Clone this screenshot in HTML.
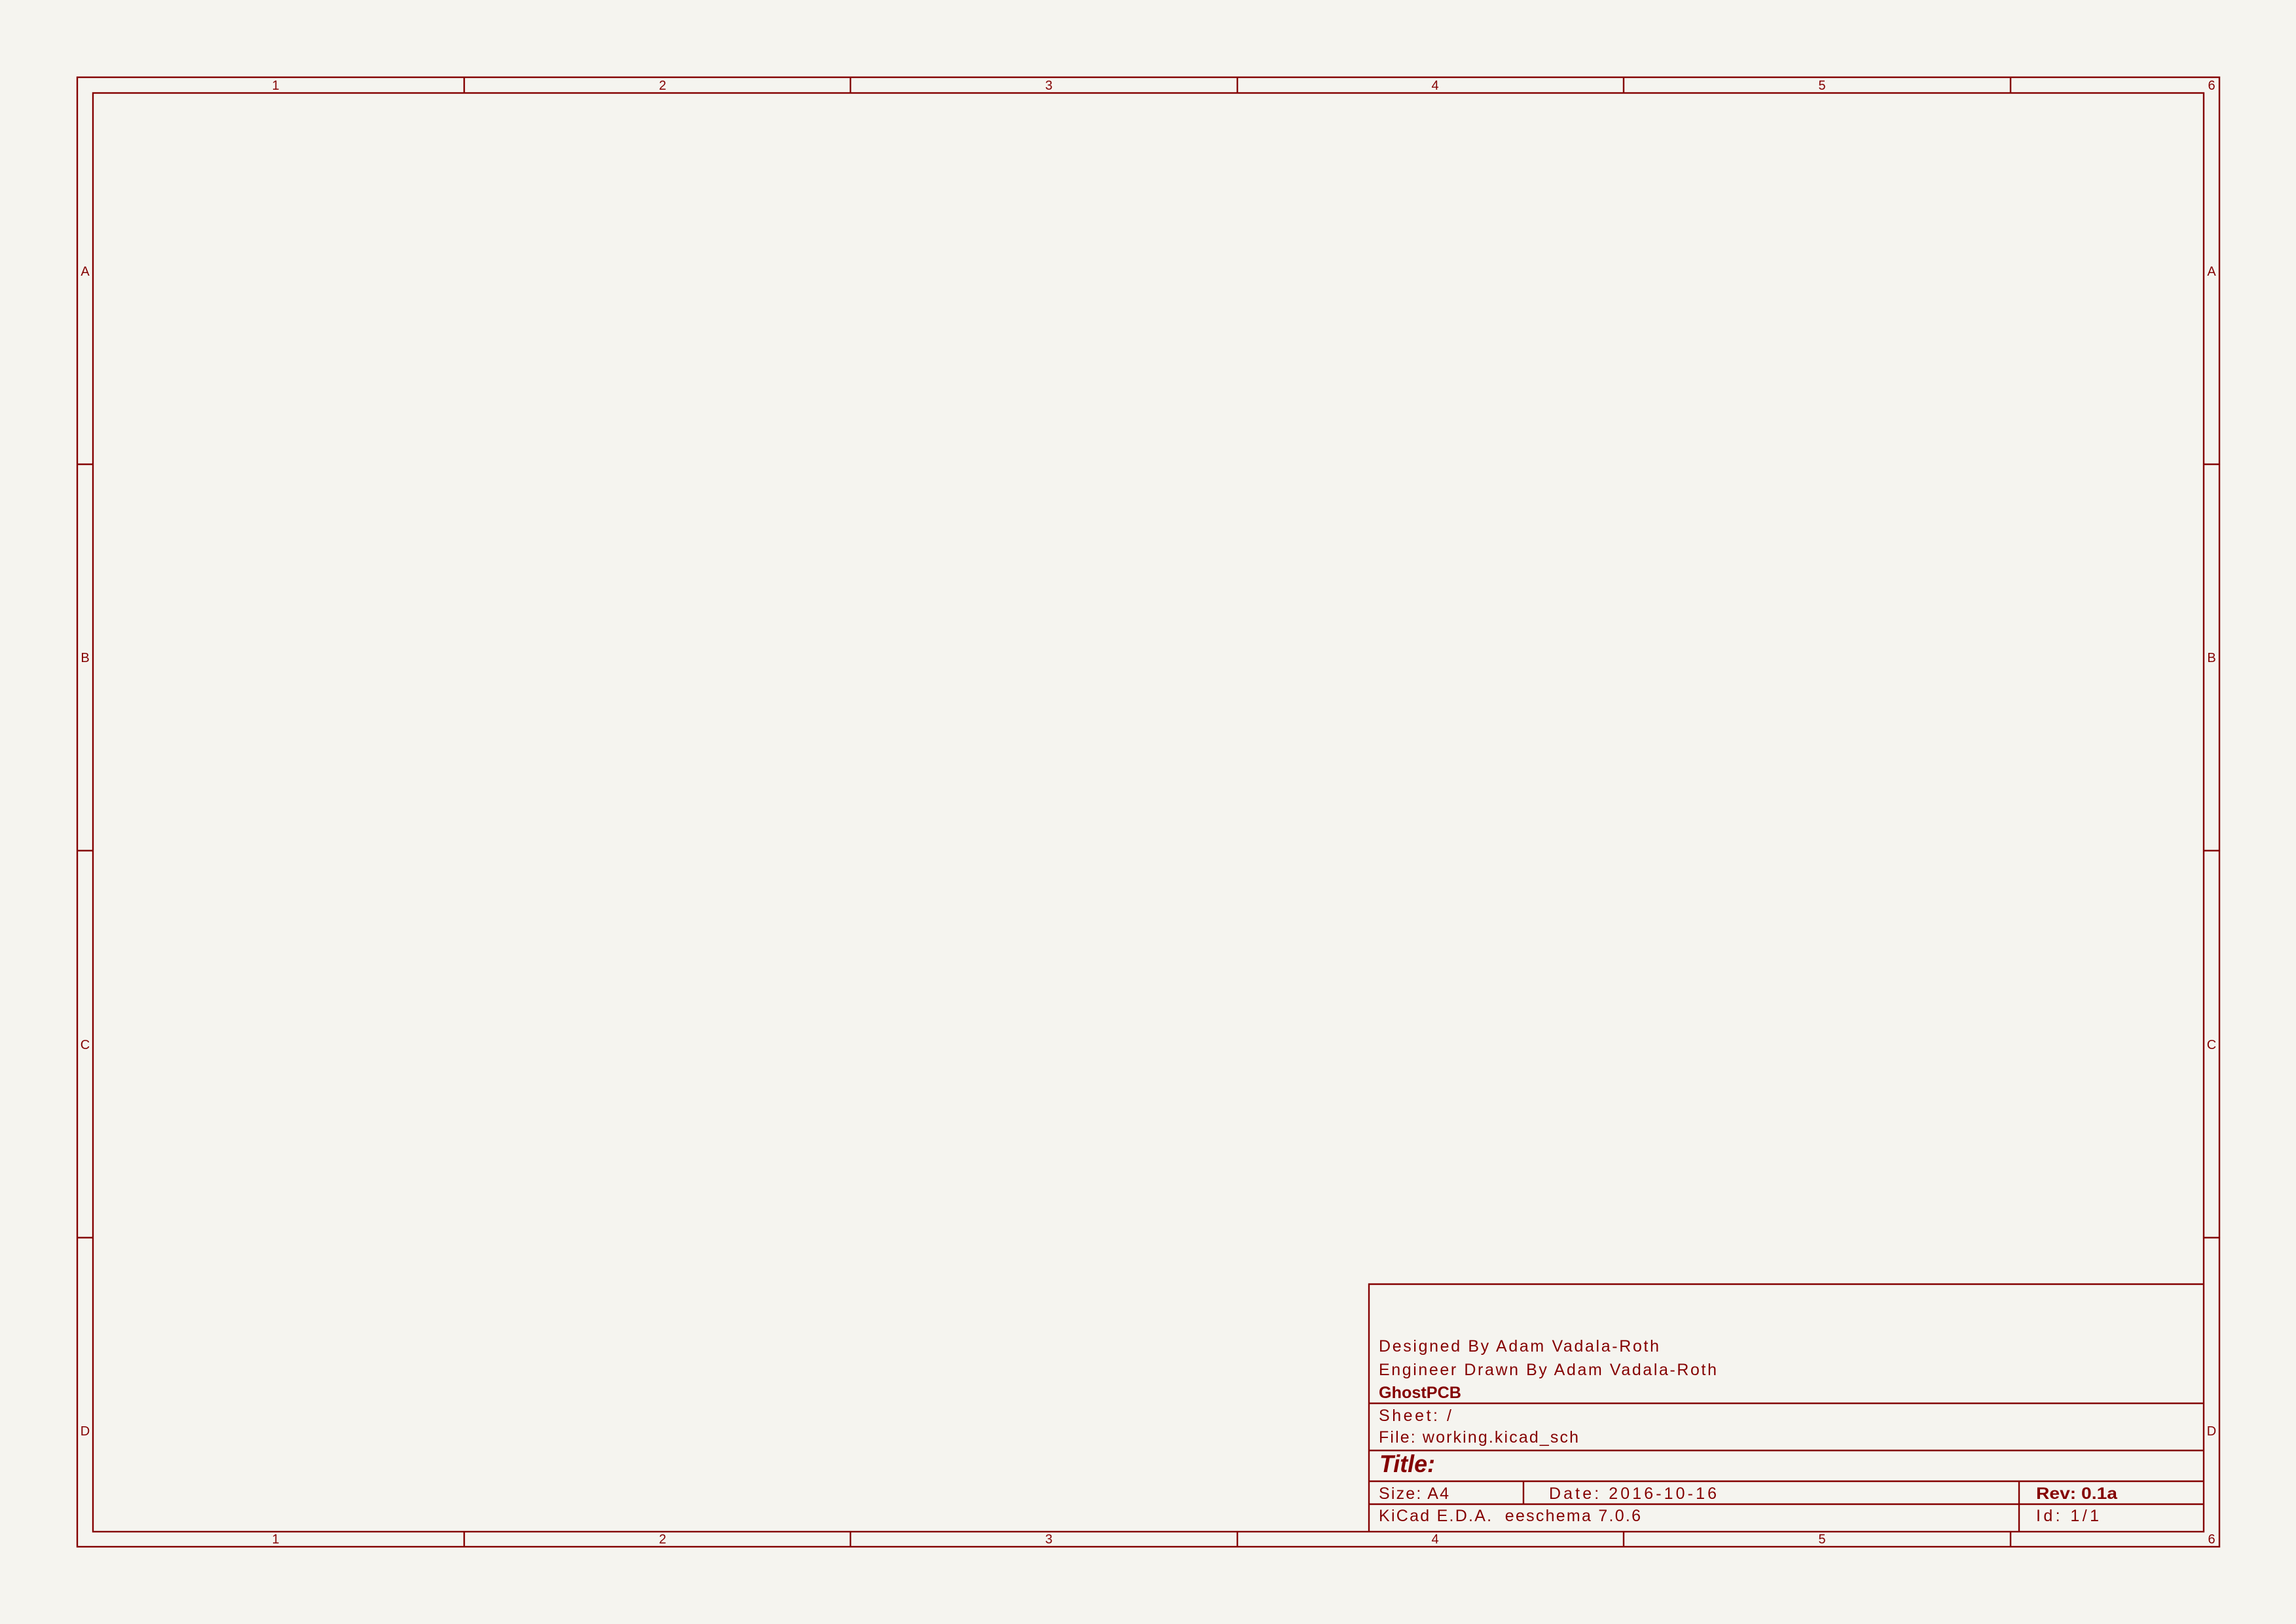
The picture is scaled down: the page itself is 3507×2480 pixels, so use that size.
<!DOCTYPE html>
<html><head><meta charset="utf-8"><style>
html,body{margin:0;padding:0;background:#f5f4ef;}
svg{display:block;}
text{font-family:"Liberation Sans",sans-serif;fill:#840000;}
</style></head><body>
<svg width="3507" height="2480" viewBox="0 0 3507 2480" xmlns="http://www.w3.org/2000/svg">
<rect width="3507" height="2480" fill="#f5f4ef"/>
<g stroke="#840000" stroke-width="2.4" fill="none">
<rect x="118" y="118" width="3272" height="2244"/>
<rect x="142" y="142" width="3224" height="2197"/>
<!-- column ticks -->
<path d="M709 118V142M1299 118V142M1890 118V142M2480 118V142M3071 118V142"/>
<path d="M709 2339V2362M1299 2339V2362M1890 2339V2362M2480 2339V2362M3071 2339V2362"/>
<!-- row ticks -->
<path d="M118 709H142M118 1299H142M118 1890H142"/>
<path d="M3366 709H3390M3366 1299H3390M3366 1890H3390"/>
<!-- title block -->
<path d="M2091 2339V1961H3366"/>
<path d="M2091 2143H3366M2091 2215H3366M2091 2262H3366M2091 2297H3366"/>
<path d="M2327 2262V2297M3084 2262V2339"/>
</g>
<g font-size="20" text-anchor="middle">
<text x="421" y="137">1</text><text x="1012" y="137">2</text><text x="1602" y="137">3</text><text x="2192" y="137">4</text><text x="2783" y="137">5</text><text x="3378" y="137">6</text>
<text x="421" y="2357">1</text><text x="1012" y="2357">2</text><text x="1602" y="2357">3</text><text x="2192" y="2357">4</text><text x="2783" y="2357">5</text><text x="3378" y="2357">6</text>
<text x="130" y="421">A</text><text x="130" y="1011">B</text><text x="130" y="1602">C</text><text x="130" y="2192">D</text>
<text x="3378" y="421">A</text><text x="3378" y="1011">B</text><text x="3378" y="1602">C</text><text x="3378" y="2192">D</text>
</g>
<g font-size="25">
<text x="2106" y="2064" textLength="428" lengthAdjust="spacing">Designed By Adam Vadala-Roth</text>
<text x="2106" y="2100" textLength="516" lengthAdjust="spacing">Engineer Drawn By Adam Vadala-Roth</text>
<text x="2106" y="2135" textLength="126" lengthAdjust="spacingAndGlyphs" font-weight="bold">GhostPCB</text>
<text x="2106" y="2170" textLength="111" lengthAdjust="spacing">Sheet: /</text>
<text x="2106" y="2203" textLength="305" lengthAdjust="spacing">File: working.kicad_sch</text>
<text x="2107" y="2248" font-size="37" font-weight="bold" font-style="italic" textLength="85" lengthAdjust="spacingAndGlyphs">Title:</text>
<text x="2106" y="2289" textLength="107" lengthAdjust="spacing">Size: A4</text>
<text x="2366" y="2289" textLength="256" lengthAdjust="spacing">Date: 2016-10-16</text>
<text x="3110" y="2289" textLength="124" lengthAdjust="spacingAndGlyphs" font-weight="bold">Rev: 0.1a</text>
<text x="2106" y="2323" textLength="400" lengthAdjust="spacing" xml:space="preserve">KiCad E.D.A.  eeschema 7.0.6</text>
<text x="3110" y="2323" textLength="96" lengthAdjust="spacing">Id: 1/1</text>
</g>
</svg>
</body></html>
